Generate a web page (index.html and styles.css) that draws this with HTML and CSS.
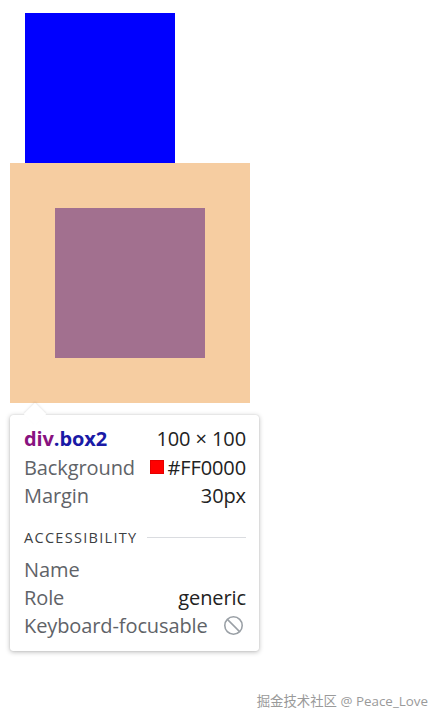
FILE: index.html
```html
<!DOCTYPE html>
<html>
<head>
<meta charset="utf-8">
<link rel="stylesheet" href="styles.css">
</head>
<body>
<div class="box1"></div>
<div class="margin-hl"><div class="box2"></div></div>
<div class="tip">
  <div class="tip-title"><span><span class="tag">div</span><span class="cls">.box2</span></span><span class="dim">100 × 100</span></div>
  <div class="row"><span class="label">Background</span><span class="val"><span class="swatch"></span>#FF0000</span></div>
  <div class="row"><span class="label">Margin</span><span class="val">30px</span></div>
  <div class="section"><span class="section-name">ACCESSIBILITY</span><span class="rule"></span></div>
  <div class="row"><span class="label">Name</span><span class="val"></span></div>
  <div class="row"><span class="label">Role</span><span class="val">generic</span></div>
  <div class="row"><span class="label">Keyboard-focusable</span><span class="val"><svg class="block" width="21" height="21" viewBox="0 0 20 20"><circle cx="10" cy="10" r="8.3" fill="none" stroke="#9aa0a6" stroke-width="1.5"/><line x1="4.2" y1="4.2" x2="15.8" y2="15.8" stroke="#9aa0a6" stroke-width="1.5"/></svg></span></div>
</div>
<div class="watermark">掘金技术社区 @ Peace_Love</div>
</body>
</html>
```
FILE: styles.css
```css
html, body {
  margin: 0;
  padding: 0;
  background: #ffffff;
}
body {
  width: 443px;
  height: 722px;
  position: relative;
  overflow: hidden;
  font-family: "Open Sans", "Noto Sans", sans-serif;
}
.box1 {
  width: 150px;
  height: 150px;
  margin: 13px 0 0 25px;
  background: #0000ff;
}
.margin-hl {
  width: 240px;
  height: 240px;
  margin-left: 10px;
  padding: 45px;
  box-sizing: border-box;
  background: #f6cda1;
}
.box2 {
  width: 150px;
  height: 150px;
  background: #a2708f;
}
.tip {
  position: relative;
  width: 249px;
  margin: 12px 0 0 10px;
  padding: 9px 13px 12px 14px;
  box-sizing: border-box;
  background: #ffffff;
  border-radius: 3px;
  box-shadow: 0 1px 5px rgba(0,0,0,0.28), 0 0 1px rgba(0,0,0,0.2);
  font-size: 20px;
  color: #5f6368;
  letter-spacing: -0.1px;
}
.tip::before {
  content: "";
  position: absolute;
  left: 17px;
  top: -9px;
  width: 16px;
  height: 16px;
  background: #ffffff;
  transform: rotate(45deg);
  box-shadow: -1px -1px 2px rgba(0,0,0,0.08);
}
.tip-title {
  position: relative;
  display: flex;
  justify-content: space-between;
  align-items: center;
  height: 28px;
  margin-bottom: 1px;
}
.tag {
  color: #881280;
  font-weight: 700;
}
.cls {
  color: #1a1aa6;
  font-weight: 700;
}
.dim {
  color: #222222;
}
.row {
  display: flex;
  justify-content: space-between;
  align-items: center;
  height: 28px;
}
.label {
  color: #5f6368;
}
.val {
  display: flex;
  align-items: center;
  color: #222222;
}
.swatch {
  width: 14px;
  height: 14px;
  background: #ff0000;
  margin-right: 3px;
  box-shadow: inset 0 0 0 1px rgba(0,0,0,0.1);
}
.block {
  display: block;
  margin-right: 2px;
}
.section {
  display: flex;
  align-items: center;
  height: 20px;
  margin: 18px 0 8px;
}
.section-name {
  font-size: 14.5px;
  letter-spacing: 1.3px;
  color: #3c4043;
}
.rule {
  flex: 1;
  height: 1px;
  background: #dadce0;
  margin-left: 10px;
}
.watermark {
  position: absolute;
  right: 15px;
  bottom: 12px;
  font-size: 13.4px;
  color: #9a9a9a;
  font-family: "Open Sans", "Noto Sans CJK SC", sans-serif;
}
```
